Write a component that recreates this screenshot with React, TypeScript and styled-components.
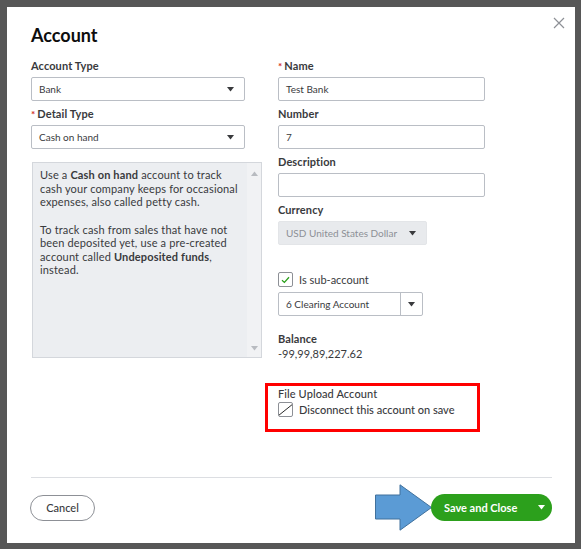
import styled, { createGlobalStyle } from "styled-components";

const GlobalStyle = createGlobalStyle`
  html, body {
    margin: 0;
    padding: 0;
    background: #575757;
  }
  body {
    font-family: Lato, "Open Sans", sans-serif;
    color: #393a3d;
  }
  * {
    box-sizing: border-box;
  }
`;

function Caret({ color = "#393a3d" }: { color?: string }) {
  return (
    <svg width="7" height="5" viewBox="0 0 7 5">
      <path d="M0 0 H7 L3.5 4.5 Z" fill={color} />
    </svg>
  );
}

function App() {
  return (
    <>
      <GlobalStyle />
      <Backdrop>
        <Modal>
          <Header>
            <Title>Account</Title>
            <CloseButton aria-label="close">
              <svg width="12" height="12" viewBox="0 0 12 12">
                <path d="M1 1 L11 11 M11 1 L1 11" stroke="#8d9096" strokeWidth="1.2" />
              </svg>
            </CloseButton>
          </Header>

          <Body>
            <Column>
              <Field>
                <Label>Account Type</Label>
                <Select width={214}>
                  <span>Bank</span>
                  <Caret />
                </Select>
              </Field>
              <Field>
                <Label>
                  <Required>*</Required>Detail Type
                </Label>
                <Select width={214}>
                  <span>Cash on hand</span>
                  <Caret />
                </Select>
              </Field>
              <HelpBox>
                <HelpText>
                  <p>
                    Use a <b>Cash on hand</b> account to track
                    <br />
                    cash your company keeps for occasional
                    <br />
                    expenses, also called petty cash.
                  </p>
                  <p>
                    To track cash from sales that have not
                    <br />
                    been deposited yet, use a pre-created
                    <br />
                    account called <b>Undeposited funds</b>,
                    <br />
                    instead.
                  </p>
                </HelpText>
                <ScrollTrack>
                  <Caret color="#b8bbc0" />
                  <Caret color="#b8bbc0" />
                </ScrollTrack>
              </HelpBox>
            </Column>

            <Column>
              <Field>
                <Label>
                  <Required>*</Required>Name
                </Label>
                <Input width={207}>Test Bank</Input>
              </Field>
              <Field>
                <Label>Number</Label>
                <Input width={207}>7</Input>
              </Field>
              <Field>
                <Label>Description</Label>
                <Input width={207} />
              </Field>
              <Field>
                <Label>Currency</Label>
                <Select width={149} disabled>
                  <span>USD United States Dollar</span>
                  <Caret />
                </Select>
              </Field>

              <SubAccount>
                <CheckRow>
                  <CheckBox>
                    <svg width="9" height="8" viewBox="0 0 9 8">
                      <path d="M1 4.2 L3.4 6.4 L8 1.2" fill="none" stroke="#2ca01c" strokeWidth="1.3" />
                    </svg>
                  </CheckBox>
                  <span>Is sub-account</span>
                </CheckRow>
                <SplitSelect>
                  <span>6 Clearing Account</span>
                  <SplitArrow>
                    <Caret />
                  </SplitArrow>
                </SplitSelect>
              </SubAccount>

              <Balance>
                <Label>Balance</Label>
                <Amount>-99,99,89,227.62</Amount>
              </Balance>

              <Highlight>
                <Label>File Upload Account</Label>
                <CheckRow>
                  <CheckBox>
                    <svg width="15" height="15" viewBox="0 0 15 15">
                      <path d="M0 14 L15 2" stroke="#1f1f1f" strokeWidth="1.1" />
                    </svg>
                  </CheckBox>
                  <DarkText>Disconnect this account on save</DarkText>
                </CheckRow>
              </Highlight>
            </Column>
          </Body>

          <Footer>
            <CancelButton>Cancel</CancelButton>
            <Actions>
              <svg width="58" height="47" viewBox="0 0 58 47">
                <path
                  d="M0.5 11 H25 V0.8 L56.5 23.5 L25 46.2 V35 H0.5 Z"
                  fill="#5b9bd5"
                  stroke="#41719c"
                  strokeWidth="1"
                />
              </svg>
              <SaveButton>
                <span>Save and Close</span>
                <Caret color="#ffffff" />
              </SaveButton>
            </Actions>
          </Footer>
        </Modal>
      </Backdrop>
    </>
  );
}

const Backdrop = styled.div`
  width: 581px;
  height: 549px;
  padding: 7px 6px 6px 7px;
`;

const Modal = styled.div`
  width: 568px;
  height: 536px;
  background: #ffffff;
  display: flex;
  flex-direction: column;
  padding: 0 23px 0 24px;
`;

const Header = styled.header`
  display: flex;
  justify-content: space-between;
  align-items: flex-start;
  height: 52px;
`;

const Title = styled.h1`
  margin: 16px 0 0 0;
  font-size: 18px;
  line-height: 24px;
  font-weight: 700;
  color: #0d0d0d;
`;

const CloseButton = styled.div`
  margin: 10px -13px 0 0;
  width: 12px;
  height: 12px;
  display: flex;
`;

const Body = styled.div`
  display: grid;
  grid-template-columns: 231px 1fr;
  column-gap: 16px;
`;

const Column = styled.div`
  display: flex;
  flex-direction: column;
  gap: 6px;
`;

const Field = styled.div`
  display: flex;
  flex-direction: column;
  gap: 4px;
`;

const Label = styled.div`
  font-size: 11px;
  line-height: 14px;
  font-weight: 700;
  color: #393a3d;
  letter-spacing: 0.1px;
`;

const Required = styled.span`
  color: #d52b1e;
  font-size: 10px;
  margin-right: 2px;
`;

const Input = styled.div<{ width: number }>`
  width: ${(p) => p.width}px;
  height: 24px;
  border: 1px solid #babec5;
  border-radius: 2px;
  padding: 0 7px;
  display: flex;
  align-items: center;
  font-size: 10px;
  color: #393a3d;
`;

const Select = styled.div<{ width: number; disabled?: boolean }>`
  width: ${(p) => p.width}px;
  height: 24px;
  border: 1px solid ${(p) => (p.disabled ? "#e3e5e8" : "#babec5")};
  border-radius: 2px;
  padding: 0 10px 0 7px;
  display: flex;
  align-items: center;
  justify-content: space-between;
  font-size: 10px;
  background: ${(p) => (p.disabled ? "#e8eaed" : "#ffffff")};
  color: ${(p) => (p.disabled ? "#8d9096" : "#393a3d")};
`;

const HelpBox = styled.div`
  margin-top: 7px;
  margin-left: 1px;
  width: 230px;
  height: 196px;
  border: 1px solid #d4d7dc;
  background: #eceef1;
  display: flex;
`;

const HelpText = styled.div`
  flex: 1;
  padding: 5px 0 0 7px;
  font-size: 11px;
  letter-spacing: 0.15px;
  line-height: 13.5px;
  color: #393a3d;
  white-space: nowrap;
  p {
    margin: 0 0 14px 0;
  }
  b {
    font-weight: 700;
  }
`;

const ScrollTrack = styled.div`
  width: 14px;
  background: #f1f2f4;
  display: flex;
  flex-direction: column;
  justify-content: space-between;
  align-items: center;
  padding: 8px 0 6px;
  svg:first-child {
    transform: rotate(180deg);
  }
`;

const SubAccount = styled.div`
  margin-top: 21px;
  display: flex;
  flex-direction: column;
  gap: 5px;
`;

const CheckRow = styled.div`
  display: flex;
  align-items: center;
  gap: 6px;
  font-size: 11px;
  line-height: 15px;
  color: #393a3d;
`;

const CheckBox = styled.div`
  width: 15px;
  height: 15px;
  border: 1px solid #8d9096;
  border-radius: 2px;
  display: flex;
  align-items: center;
  justify-content: center;
  overflow: hidden;
`;

const SplitSelect = styled.div`
  width: 145px;
  height: 24px;
  border: 1px solid #babec5;
  border-radius: 2px;
  display: flex;
  align-items: center;
  justify-content: space-between;
  padding-left: 7px;
  font-size: 10px;
  color: #393a3d;
`;

const SplitArrow = styled.div`
  width: 22px;
  height: 100%;
  border-left: 1px solid #babec5;
  display: flex;
  align-items: center;
  justify-content: center;
`;

const Balance = styled.div`
  margin-top: 10px;
  display: flex;
  flex-direction: column;
  gap: 1px;
`;

const Amount = styled.div`
  font-size: 11px;
  line-height: 14px;
  color: #393a3d;
`;

const Highlight = styled.div`
  margin: 16px 0 0 -13px;
  width: 215px;
  height: 49px;
  border: 3px solid #ff0000;
  padding: 1px 0 0 10px;
  display: flex;
  flex-direction: column;
  gap: 1px;
  ${Label} {
    font-weight: 500;
  }
`;

const DarkText = styled.span`
  font-weight: 500;
  color: #393a3d;
`;

const Footer = styled.footer`
  margin-top: auto;
  border-top: 1px solid #dcdee2;
  padding: 6px 0 12px;
  display: flex;
  justify-content: space-between;
  align-items: center;
`;

const CancelButton = styled.div`
  margin-left: -1px;
  width: 65px;
  height: 26px;
  border: 1px solid #8d9096;
  border-radius: 13px;
  display: flex;
  align-items: center;
  justify-content: center;
  font-size: 11px;
  font-weight: 500;
  color: #393a3d;
`;

const Actions = styled.div`
  display: flex;
  align-items: center;
  svg {
    margin-right: -2px;
  }
`;

const SaveButton = styled.div`
  width: 121px;
  height: 27px;
  border-radius: 14px;
  background: #2ca01c;
  color: #ffffff;
  font-size: 11px;
  font-weight: 700;
  display: flex;
  align-items: center;
  justify-content: space-between;
  padding: 0 9px 0 13px;
`;

export default App;
